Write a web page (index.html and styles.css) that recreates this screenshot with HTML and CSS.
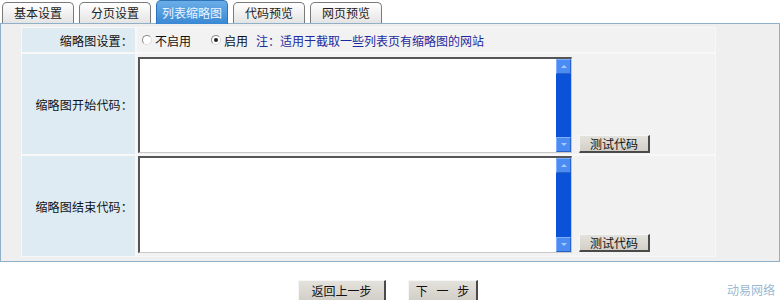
FILE: index.html
```html
<!DOCTYPE html>
<html lang="zh-CN">
<head>
<meta charset="utf-8">
<title>列表缩略图</title>
<link rel="stylesheet" href="styles.css">
</head>
<body>
<div class="tabs">
  <div class="tab">基本设置</div>
  <div class="tab">分页设置</div>
  <div class="tab active">列表缩略图</div>
  <div class="tab">代码预览</div>
  <div class="tab">网页预览</div>
</div>
<div class="panel">
  <div class="form">
    <div class="label row1">缩略图设置：</div>
    <div class="cell row1 opts">
      <span class="radio"></span><span class="opt">不启用</span>
      <span class="radio checked"></span><span class="opt">启用</span>
      <span class="note">注：适用于截取一些列表页有缩略图的网站</span>
    </div>
    <div class="label">缩略图开始代码：</div>
    <div class="cell code first">
      <div class="area">
        <textarea class="ta"></textarea>
        <div class="sb"><div class="sbtn up"></div><div class="sbtrack"></div><div class="sbtn down"></div></div>
      </div>
      <div class="btn test">测试代码</div>
    </div>
    <div class="label">缩略图结束代码：</div>
    <div class="cell code second">
      <div class="area">
        <textarea class="ta"></textarea>
        <div class="sb"><div class="sbtn up"></div><div class="sbtrack"></div><div class="sbtn down"></div></div>
      </div>
      <div class="btn test">测试代码</div>
    </div>
  </div>
</div>
<div class="footer">
  <div class="btn big back">返回上一步</div>
  <div class="btn big next">下 一 步</div>
  <div class="mark">动易网络</div>
</div>
</body>
</html>
```
FILE: styles.css
```css
html, body {
  margin: 0;
  padding: 0;
  background: #ffffff;
}
body {
  width: 780px;
  height: 300px;
  overflow: hidden;
  font-family: "Noto Sans CJK SC", "DejaVu Sans", sans-serif;
  font-size: 12px;
  color: #111;
}
.tabs {
  display: flex;
  align-items: flex-end;
  gap: 5px;
  height: 23px;
  padding-left: 2px;
}
.tab {
  box-sizing: border-box;
  width: 72px;
  height: 21px;
  border: 1px solid #7a7a7a;
  border-bottom: none;
  border-radius: 5px 5px 0 0;
  background: linear-gradient(#ffffff, #e4e4e4);
  text-align: center;
  line-height: 20px;
  color: #222;
}
.tab.active {
  height: 24px;
  margin-bottom: -1px;
  position: relative;
  border-color: #2f73b8;
  background: linear-gradient(#6aaee8, #3a88d4);
  color: #eef4ff;
  line-height: 23px;
}
.panel {
  box-sizing: border-box;
  width: 780px;
  height: 239px;
  border: 1px solid #8fb0c9;
  background: #efefef;
  padding: 3px 63px 0 20px;
}
.form {
  display: grid;
  grid-template-columns: 113px 1fr;
  grid-template-rows: 24px 100px 100px;
  gap: 2px;
  border: 1px solid #f8f8f8;
  background: #f8f8f8;
}
.label {
  background: #deebf3;
  display: flex;
  align-items: center;
  justify-content: flex-end;
  padding-right: 2px;
  letter-spacing: 0.2px;
}
.cell {
  background: #f2f2f2;
}
.opts {
  display: flex;
  align-items: center;
  padding-left: 5px;
}
.radio {
  box-sizing: border-box;
  width: 10px;
  height: 10px;
  border-radius: 50%;
  border: 1px solid #8a8a8a;
  border-right-color: #dcdcdc;
  border-bottom-color: #dcdcdc;
  background: #fff;
  margin-right: 3px;
  display: flex;
  align-items: center;
  justify-content: center;
}
.radio.checked::after {
  content: "";
  width: 4px;
  height: 4px;
  border-radius: 50%;
  background: #222;
}
.opt {
  margin-right: 20px;
}
.opt + .radio + .opt {
  margin-right: 8px;
}
.note {
  color: #1c2aa0;
}
.code {
  display: flex;
  align-items: flex-end;
  padding-left: 1px;
}
.code.first {
  padding-top: 3px;
  padding-bottom: 1px;
}
.code.second {
  align-items: flex-end;
  padding-bottom: 3px;
}
.area {
  box-sizing: border-box;
  width: 434px;
  height: 96px;
  display: flex;
  border-top: 2px solid #555;
  border-left: 2px solid #555;
  border-right: 1px solid #c8c8c8;
  border-bottom: 1px solid #c8c8c8;
  background: #fff;
}
.second .area {
  height: 97px;
}
.ta {
  flex: 1;
  border: none;
  margin: 0;
  padding: 2px;
  resize: none;
  outline: none;
  background: #fff;
}
.sb {
  width: 15px;
  display: flex;
  flex-direction: column;
  background: #0a52d8;
}
.sbtrack {
  flex: 1;
}
.sbtn {
  box-sizing: border-box;
  height: 15px;
  background: #4b8cf2;
  border: 1px solid #7fb0ff;
  border-right-color: #2a62c8;
  border-bottom-color: #2a62c8;
  display: flex;
  align-items: center;
  justify-content: center;
}
.sbtn::after {
  content: "";
  width: 0;
  height: 0;
  border-left: 3px solid transparent;
  border-right: 3px solid transparent;
}
.sbtn.up::after {
  border-bottom: 3px solid #a9c8ff;
}
.sbtn.down::after {
  border-top: 3px solid #a9c8ff;
}
.btn {
  box-sizing: border-box;
  background: linear-gradient(#e4e2dc, #d2cfc8);
  border: 1px solid #f6f6f6;
  border-right: 2px solid #4a4a4a;
  border-bottom: 2px solid #4a4a4a;
  text-align: center;
  color: #111;
}
.test {
  width: 71px;
  height: 18px;
  line-height: 15px;
  margin-left: 7px;
  margin-bottom: 0;
}
.second .test {
  margin-bottom: 1px;
}
.footer {
  position: relative;
  display: flex;
  justify-content: center;
  gap: 22px;
  padding-top: 18px;
  padding-right: 4px;
}
.big {
  height: 22px;
  line-height: 19px;
}
.back {
  width: 88px;
}
.next {
  width: 70px;
  word-spacing: 6px;
}
.mark {
  position: absolute;
  right: 5px;
  top: 19px;
  color: #9bb8d0;
  font-size: 12px;
}
```
